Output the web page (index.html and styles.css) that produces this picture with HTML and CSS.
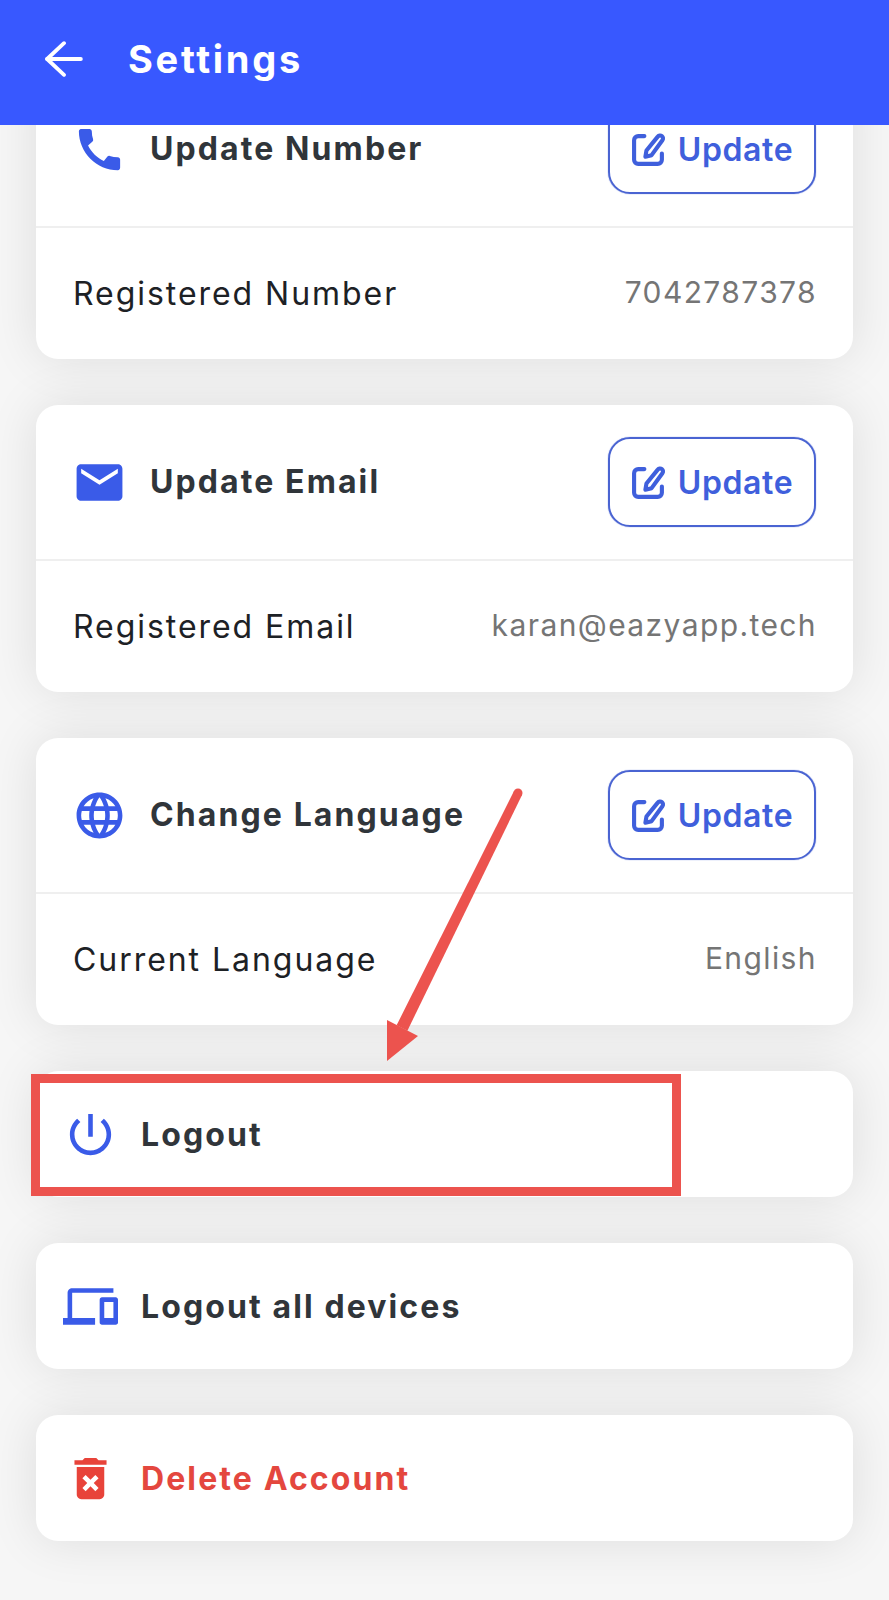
FILE: index.html
```html
<!DOCTYPE html>
<html lang="en">

<head>
    <meta charset="UTF-8">
    <meta name="viewport" content="width=device-width, initial-scale=1.0">
    <title>Settings</title>
    <link rel="stylesheet" href="styles.css">
</head>

<body>

    <header class="topbar">
        <svg class="back-icon" viewBox="0 0 36 34" fill="none" stroke="#fff" stroke-width="3.6" stroke-linecap="round" stroke-linejoin="round">
            <path d="M34 17H2"/>
            <path d="M18 2L2 17l16 15"/>
        </svg>
        <h1>Settings</h1>
    </header>

    <main class="content">
        <section class="card">
            <div class="card-head">
                <svg class="icon" viewBox="0 0 24 24"><path d="M20.01 15.38c-1.23 0-2.42-.2-3.53-.56-.35-.12-.74-.03-1.01.24l-1.57 1.97c-2.83-1.35-5.48-3.9-6.89-6.83l1.95-1.66c.27-.28.35-.67.24-1.02-.37-1.11-.56-2.3-.56-3.53 0-.54-.45-.99-.99-.99H4.19C3.65 3 3 3.24 3 3.99 3 13.28 10.73 21 20.01 21c.71 0 .99-.63.99-1.18v-3.45c0-.54-.45-.99-.99-.99z"/></svg>
                <h2>Update Number</h2>
                <a class="update-btn">
                    <svg class="edit-icon" viewBox="0 0 34 34" fill="none" stroke="currentColor" stroke-width="4" stroke-linecap="round" stroke-linejoin="round">
                        <path d="M13 4H7a4 4 0 0 0-4 4v19a4 4 0 0 0 4 4h19a4 4 0 0 0 4-4v-6"/>
                        <path d="M14 24l1-6L26 4.500a2.800 2.800 0 0 1 4.500 3.500L20 22.500z"/>
                    </svg>
                    Update
                </a>
            </div>
            <div class="card-row">
                <span class="label">Registered Number</span>
                <span class="value">7042787378</span>
            </div>
        </section>

        <section class="card">
            <div class="card-head">
                <svg class="icon" viewBox="0 0 24 24"><path d="M20 4H4c-1.100 0-1.990.9-1.990 2L2 18c0 1.100.9 2 2 2h16c1.100 0 2-.9 2-2V6c0-1.100-.9-2-2-2zm0 4l-8 5-8-5V6l8 5 8-5v2z"/></svg>
                <h2>Update Email</h2>
                <a class="update-btn">
                    <svg class="edit-icon" viewBox="0 0 34 34" fill="none" stroke="currentColor" stroke-width="4" stroke-linecap="round" stroke-linejoin="round">
                        <path d="M13 4H7a4 4 0 0 0-4 4v19a4 4 0 0 0 4 4h19a4 4 0 0 0 4-4v-6"/>
                        <path d="M14 24l1-6L26 4.500a2.800 2.800 0 0 1 4.500 3.500L20 22.500z"/>
                    </svg>
                    Update
                </a>
            </div>
            <div class="card-row">
                <span class="label">Registered Email</span>
                <span class="value">karan@eazyapp.tech</span>
            </div>
        </section>

        <section class="card">
            <div class="card-head">
                <svg class="icon" viewBox="0 0 24 24"><path d="M11.990 2C6.470 2 2 6.480 2 12s4.470 10 9.990 10C17.520 22 22 17.520 22 12S17.520 2 11.990 2zm6.930 6h-2.950c-.32-1.250-.78-2.450-1.380-3.560 1.840.63 3.370 1.910 4.330 3.560zM12 4.040c.83 1.200 1.480 2.530 1.910 3.960h-3.820c.43-1.430 1.080-2.760 1.910-3.960zM4.260 14C4.100 13.360 4 12.690 4 12s.1-1.360.26-2h3.380c-.08.66-.14 1.320-.14 2 0 .68.06 1.340.14 2H4.260zm.82 2h2.950c.32 1.250.78 2.450 1.380 3.560-1.840-.63-3.370-1.900-4.330-3.560zm2.950-8H5.080c.96-1.660 2.490-2.930 4.330-3.560C8.810 5.550 8.350 6.750 8.030 8zM12 19.960c-.83-1.200-1.480-2.530-1.910-3.960h3.820c-.43 1.430-1.080 2.760-1.910 3.960zM14.340 14H9.660c-.09-.66-.16-1.320-.16-2 0-.68.07-1.350.16-2h4.680c.09.65.16 1.320.16 2 0 .68-.07 1.340-.16 2zm.25 5.560c.6-1.110 1.060-2.310 1.380-3.560h2.950c-.96 1.650-2.490 2.930-4.330 3.560zM16.360 14c.08-.66.14-1.320.14-2 0-.68-.06-1.340-.14-2h3.380c.16.64.26 1.310.26 2s-.1 1.360-.26 2h-3.380z"/></svg>
                <h2>Change Language</h2>
                <a class="update-btn">
                    <svg class="edit-icon" viewBox="0 0 34 34" fill="none" stroke="currentColor" stroke-width="4" stroke-linecap="round" stroke-linejoin="round">
                        <path d="M13 4H7a4 4 0 0 0-4 4v19a4 4 0 0 0 4 4h19a4 4 0 0 0 4-4v-6"/>
                        <path d="M14 24l1-6L26 4.500a2.800 2.800 0 0 1 4.500 3.500L20 22.500z"/>
                    </svg>
                    Update
                </a>
            </div>
            <div class="card-row">
                <span class="label">Current Language</span>
                <span class="value">English</span>
            </div>
        </section>

        <section class="card action">
            <svg class="icon" viewBox="0 0 24 24"><path d="M13 3h-2v10h2V3zm4.830 2.170l-1.420 1.420C17.990 7.860 19 9.810 19 12c0 3.870-3.130 7-7 7s-7-3.130-7-7c0-2.190 1.010-4.140 2.580-5.420L6.170 5.170C4.230 6.820 3 9.260 3 12c0 4.970 4.030 9 9 9s9-4.030 9-9c0-2.740-1.230-5.180-3.170-6.830z"/></svg>
            <h2>Logout</h2>
        </section>

        <section class="card action">
            <svg class="icon" viewBox="0 0 24 24"><path d="M4 6h18V4H4c-1.100 0-2 .9-2 2v11H0v3h14v-3H4V6zm19 2h-6c-.55 0-1 .45-1 1v10c0 .55.45 1 1 1h6c.55 0 1-.45 1-1V9c0-.55-.45-1-1-1zm-1 9h-4v-7h4v7z"/></svg>
            <h2>Logout all devices</h2>
        </section>

        <section class="card action danger">
            <svg class="icon" viewBox="0 0 24 24"><path d="M6 19c0 1.100.9 2 2 2h8c1.100 0 2-.9 2-2V7H6v12zm2.460-7.120l1.410-1.410L12 12.590l2.120-2.120 1.410 1.410L13.410 14l2.120 2.120-1.410 1.410L12 15.410l-2.120 2.120-1.410-1.410L10.590 14l-2.130-2.120zM15.500 4l-1-1h-5l-1 1H5v2h14V4z"/></svg>
            <h2>Delete Account</h2>
        </section>
    </main>

    <!-- red annotation drawn over the screenshot -->
    <div class="mark-box"></div>
    <svg class="mark-arrow" viewBox="0 0 889 1600">
        <polygon points="522,795 514,791 396.600,1025.300 407.400,1030.700"/>
        <circle cx="518" cy="793" r="4.500"/>
        <polygon points="387,1061 387,1020 418,1036"/>
    </svg>

</body>

</html>
```

FILE: styles.css
```css
body {
    font-family: Inter, "Liberation Sans", sans-serif;
    margin: 0;
    padding: 0;
    height: 1600px;
    overflow: hidden;
    position: relative;
    background: #f6f6f6;
}

.topbar {
    position: absolute;
    top: 0;
    left: 0;
    right: 0;
    height: 117px;
    z-index: 2;
    display: flex;
    align-items: center;
    gap: 45px;
    padding: 0 0 8px 45px;
    background: #3858ff;
    color: white;
}

.back-icon {
    width: 38px;
    height: 36px;
}

.topbar h1 {
    margin: 0;
    font-size: 38px;
    font-weight: 700;
    letter-spacing: 2.7px;
}

.content {
    display: flex;
    flex-direction: column;
    gap: 46px;
    padding: 72px 36px 0;
}

.card {
    background: white;
    border-radius: 22px;
    box-shadow: 0 0 50px rgba(0, 0, 0, 0.1);
}

.card-head {
    display: flex;
    align-items: center;
    gap: 23px;
    height: 156px;
    box-sizing: border-box;
    padding: 0 37px 0 36px;
    border-bottom: 2px solid #efefef;
}

.card-row {
    display: flex;
    align-items: center;
    justify-content: space-between;
    height: 131px;
    padding: 0 36px 0 37px;
}

.card h2 {
    margin: 0;
    font-size: 32px;
    font-weight: 700;
    letter-spacing: 2.1px;
    color: #30353a;
}

.card-head h2 {
    margin-bottom: 2px;
}

.icon {
    width: 55px;
    height: 55px;
    flex: none;
    fill: #3a5be8;
}

.update-btn {
    display: flex;
    align-items: center;
    justify-content: center;
    gap: 12px;
    margin-left: auto;
    width: 208px;
    height: 90px;
    box-sizing: border-box;
    border: 2px solid #4a64d2;
    border-radius: 22px;
    box-shadow: 0 0 1px #4a64d2;
    color: #3f5fdc;
    font-size: 32px;
    font-weight: 600;
    letter-spacing: 0.6px;
}

.edit-icon {
    width: 35px;
    height: 35px;
}

.label {
    font-size: 32px;
    letter-spacing: 1.95px;
    color: #1d2125;
}

.value {
    margin-bottom: 3px;
    font-size: 30px;
    letter-spacing: 1.4px;
    color: #757575;
}

.action {
    display: flex;
    align-items: center;
    gap: 23px;
    height: 126px;
    padding-left: 27px;
}

.danger .icon {
    fill: #e8433a;
}

.card.danger h2 {
    color: #e4473e;
}

.mark-box {
    position: absolute;
    left: 31px;
    top: 1074px;
    width: 632px;
    height: 104px;
    border: 9px solid #ec534e;
}

.mark-arrow {
    position: absolute;
    top: 0;
    left: 0;
    width: 889px;
    height: 1600px;
    fill: #ec534e;
}
```
